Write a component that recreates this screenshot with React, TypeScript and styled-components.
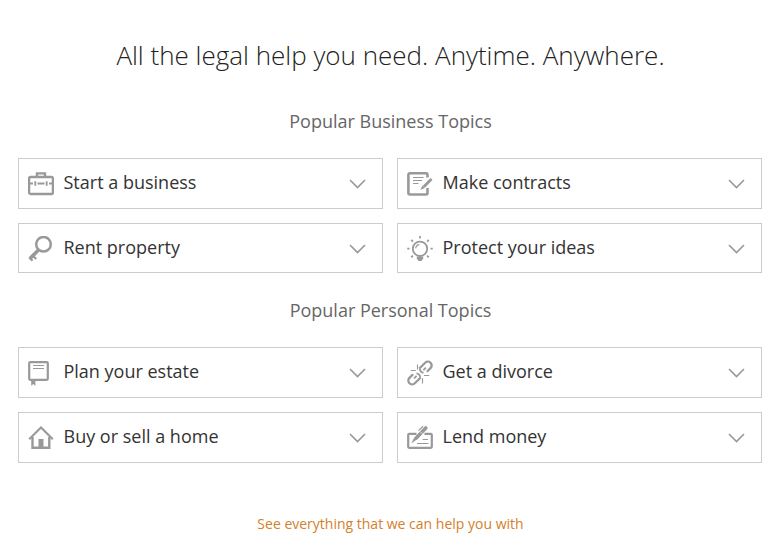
import React from 'react';
import styled, { createGlobalStyle } from 'styled-components';

const GlobalStyle = createGlobalStyle`
  * { box-sizing: border-box; }
  body { margin: 0; background: #fff; font-family: 'Open Sans', 'Noto Sans', sans-serif; }
`;

const Page = styled.main`
  width: 784px;
  height: 549px;
  padding: 35px 22px 0 18px;
  overflow: hidden;
  display: flex;
  flex-direction: column;
  background: #fff;
`;

const Title = styled.h1`
  margin: 0;
  height: 40px;
  line-height: 40px;
  padding-left: 1px;
  font-size: 26px;
  font-weight: 300;
  color: #222;
  text-align: center;
  white-space: nowrap;
`;

const Section = styled.section<{ $gap: number }>`
  margin-top: ${(p) => p.$gap}px;
`;

const SectionTitle = styled.h2`
  margin: 0 0 25px;
  height: 24px;
  line-height: 24px;
  padding-left: 1px;
  font-size: 18px;
  font-weight: 400;
  color: #666;
  text-align: center;
`;

const TopicGrid = styled.div<{ $rows: string }>`
  display: grid;
  grid-template-columns: 365px 365px;
  grid-template-rows: ${(p) => p.$rows};
  gap: 14px;
`;

const TopicButton = styled.button`
  display: flex;
  align-items: flex-start;
  padding: 11px 16px 10px 9px;
  border: 1px solid #ccc;
  border-radius: 0;
  background: #fff;
  font-family: inherit;
  text-align: left;
  cursor: pointer;
`;

const TopicIcon = styled.svg`
  flex: none;
  width: 26px;
  height: 26px;
  margin-top: 1px;
  fill: none;
  stroke: #999;
  stroke-width: 2;
`;

const TopicLabel = styled.span`
  flex: 1;
  margin-left: 9.5px;
  line-height: 24px;
  font-size: 18px;
  color: #333;
`;

const Chevron = styled.svg`
  flex: none;
  align-self: center;
  width: 17px;
  height: 10px;
  fill: none;
  stroke: #999;
  stroke-width: 1.6;
`;

const MoreLink = styled.a`
  align-self: center;
  margin-top: 51px;
  padding-left: 1px;
  line-height: 20px;
  font-size: 14px;
  color: #d37f2c;
  text-decoration: none;
`;

const icons = {
  briefcase: (
    <>
      <rect x="1.1" y="6" width="23.8" height="17" rx="1.5" strokeWidth="2.3" />
      <path d="M9 5.5V2.4h8v3" strokeWidth="2.4" />
      <path d="M2 12.5h3M9.5 12.5h7M21 12.5h3" strokeWidth="1.8" />
      <path d="M7.3 10.3v4.4M18.7 10.3v4.4" strokeWidth="1.8" />
    </>
  ),
  key: (
    <>
      <circle cx="15.5" cy="8.3" r="7.3" strokeWidth="2.5" />
      <path d="M10.5 14L2 22.5" strokeWidth="3.6" />
      <path d="M4.2 19.5l4 3.4M1.2 21.5l3.3 3.2" strokeWidth="2.2" />
    </>
  ),
  contract: (
    <>
      <path d="M20.5 6.5V3.8Q20.5 2.3 19 2.3H3Q1.4 2.3 1.4 3.8V22Q1.4 23.5 3 23.5H19Q20.5 23.5 20.5 22V17" strokeWidth="2.6" />
      <path d="M6 6.5h10.5M6 9.5h9M6 12.5h5.5" strokeWidth="1.2" />
      <path d="M24.5 8L16.8 15.7" strokeWidth="2.8" />
      <path d="M15.5 14.5l2.4 2.4-4.6 2z" fill="#999" stroke="none" />
    </>
  ),
  bulb: (
    <>
      <circle cx="13" cy="12.8" r="7.2" strokeWidth="1.8" />
      <path d="M8.7 12.3Q9.2 8.8 12.4 8.6" strokeWidth="1.2" />
      <path d="M13 0v2.4M4.2 3.9l1.7 1.7M21.8 3.9l-1.7 1.7M.3 12.7h2.2M23.5 12.7h2.2M4.2 21.4l1.7-1.7M21.8 21.4l-1.7-1.7" strokeWidth="1.7" />
      <path d="M9.8 20.5h6.4v2.1l-1.8 2.3h-2.8l-1.8-2.3z" fill="#999" stroke="none" />
    </>
  ),
  book: (
    <>
      <rect x="1.2" y="2.2" width="18.6" height="17.6" rx="1" strokeWidth="2.2" />
      <path d="M5 5.5h11M5 8.5h11" strokeWidth="1.2" />
      <path d="M3.2 20h4.2v5.8l-2.1-1.7-2.1 1.7z" fill="#999" stroke="none" />
    </>
  ),
  home: (
    <>
      <path d="M1.2 14.2L13 2.4l11.8 11.8" strokeWidth="2.1" />
      <path d="M4.5 12v10.8h16.8V12" strokeWidth="2.4" />
      <path d="M10.5 14h5v9h-5z" fill="#999" stroke="none" />
    </>
  ),
  chain: (
    <>
      <g transform="rotate(-45 13 13)" strokeWidth="2.3">
        <path d="M15.7 9.4h8.2a3.8 3.8 0 0 1 0 7.6h-5.2" />
        <path d="M10.3 16.6H2.1a3.8 3.8 0 0 1 0-7.6h5.2" />
        <path d="M16.1 9.7a3.8 3.8 0 0 0-.3 5.5M21 13.3h-3.5" strokeWidth="1.8" />
        <path d="M9.9 16.3a3.8 3.8 0 0 0 .3-5.5M5 12.7h3.5" strokeWidth="1.8" />
      </g>
      <path d="M10.5 4.5v5M3.8 10.5h5M15.5 18.2v5.2M17 15.5h5.3" strokeWidth="1.1" />
    </>
  ),
  check: (
    <>
      <path d="M9.5 8.8H2.2Q1.2 8.8 1.2 9.8V21.8Q1.2 22.8 2.2 22.8H23.8Q24.8 22.8 24.8 21.8V9.8Q24.8 8.8 23.8 8.8H17.5" strokeWidth="2.2" />
      <path d="M18.8 3L9.5 12.8" strokeWidth="3.6" strokeLinecap="round" />
      <path d="M11.5 5.6l4.6-4.4" strokeWidth="1.2" />
      <path d="M7.4 12.2l2.4 2.4-5.6 3.8z" fill="#999" stroke="none" />
      <path d="M15.5 14.5H21M10 18.5h11.5" strokeWidth="1.2" />
      <path d="M13.2 6.6l2.2 2.2" stroke="#fff" strokeWidth=".7" />
    </>
  ),
};

type Topic = { label: string; icon: keyof typeof icons };

const businessTopics: Topic[] = [
  { label: 'Start a business', icon: 'briefcase' },
  { label: 'Make contracts', icon: 'contract' },
  { label: 'Rent property', icon: 'key' },
  { label: 'Protect your ideas', icon: 'bulb' },
];

const personalTopics: Topic[] = [
  { label: 'Plan your estate', icon: 'book' },
  { label: 'Get a divorce', icon: 'chain' },
  { label: 'Buy or sell a home', icon: 'home' },
  { label: 'Lend money', icon: 'check' },
];

function Topics({ items, rows }: { items: Topic[]; rows: string }) {
  return (
    <TopicGrid $rows={rows}>
      {items.map((topic) => (
        <TopicButton key={topic.label} type="button">
          <TopicIcon viewBox="0 0 26 26" aria-hidden="true">{icons[topic.icon]}</TopicIcon>
          <TopicLabel>{topic.label}</TopicLabel>
          <Chevron viewBox="0 0 17 10" aria-hidden="true">
            <path d="M1 1l7.5 7.6L16 1" />
          </Chevron>
        </TopicButton>
      ))}
    </TopicGrid>
  );
}

export default function App() {
  return (
    <>
      <GlobalStyle />
      <Page>
        <Title>All the legal help you need. Anytime. Anywhere.</Title>
        <Section $gap={34}>
          <SectionTitle>Popular Business Topics</SectionTitle>
          <Topics items={businessTopics} rows="51px 50px" />
        </Section>
        <Section $gap={25}>
          <SectionTitle>Popular Personal Topics</SectionTitle>
          <Topics items={personalTopics} rows="51px 51px" />
        </Section>
        <MoreLink href="#">See everything that we can help you with</MoreLink>
      </Page>
    </>
  );
}
